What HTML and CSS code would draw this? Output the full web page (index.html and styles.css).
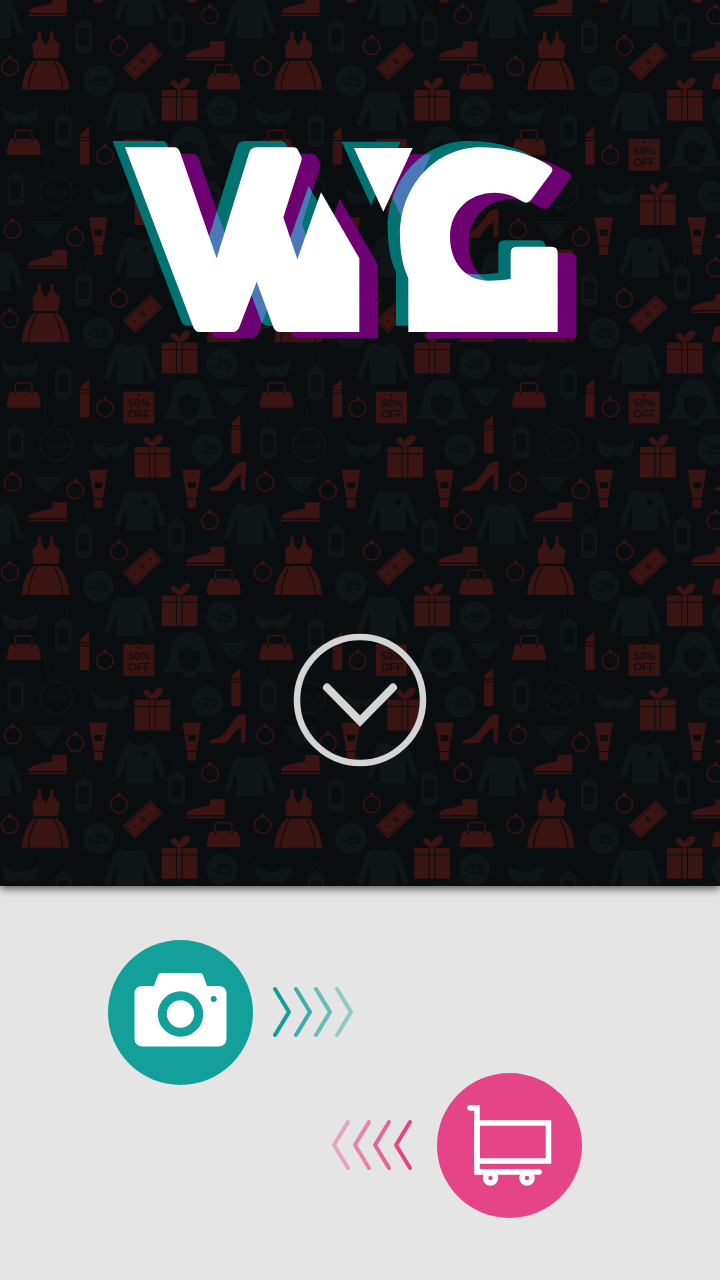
FILE: index.html
```html
<!DOCTYPE html>
<html lang="en">
<head>
<meta charset="utf-8">
<title>WYG</title>
<link rel="stylesheet" href="styles.css">
</head>
<body>
<header class="hero">
  <svg class="pattern" viewBox="0 0 720 886" aria-hidden="true">
    <defs>
      <g id="ring" class="ring"><circle r="25"/><circle class="knob" cy="-30" r="5.5"/></g>
      <g id="bag" class="red">
        <path d="M14 28H88Q94 28 96 36L102 66Q103 76 94 76H8Q-1 76 0 66L7 36Q9 28 14 28Z"/>
        <path class="redline" d="M26 30V10Q26 2 34 2H68Q76 2 76 10V30"/>
        <circle class="hole" cx="26" cy="33" r="3.5"/><circle class="hole" cx="76" cy="33" r="3.5"/>
      </g>
      <g id="lipstick" class="red">
        <path d="M2 32V22L27 0V32Z"/><rect y="35" width="28" height="6"/><rect y="44" width="28" height="71"/>
      </g>
      <g id="gift" class="red">
        <path d="M50 37C36 30 24 22 28 13C33 4 46 8 52 24C58 8 70-1 80 2C90 6 84 20 74 28C68 33 60 36 55 37Z"/>
        <rect y="38" width="107" height="19"/><rect y="60" width="107" height="70"/>
        <rect class="hole" x="43" y="38" width="3" height="92"/><rect class="hole" x="60" y="38" width="3" height="92"/>
      </g>
      <g id="tube" class="red">
        <path d="M0 0H56L42 85H14Z"/><rect x="15" y="88" width="26" height="25"/>
        <path class="hole" d="M15 37H41L39 55H18Z"/>
      </g>
      <g id="shoe" class="red">
        <path d="M0 48Q0 36 20 30L72 18V0H116V48Z"/><rect y="52" width="116" height="5"/>
      </g>
      <g id="disc" class="grey">
        <circle r="47"/><text class="disc-text" y="15" text-anchor="middle">-25</text>
      </g>
      <g id="collar">
        <path class="grey" d="M33 35Q55 55 85 57Q115 55 140 35Q145 80 110 87Q90 90 85 70Q80 90 60 87Q30 80 33 35Z"/>
        <path class="greyline" d="M33 35Q22-2 10 10M140 35Q150-2 162 8"/>
      </g>
      <g id="tag">
        <ellipse class="greyline" cx="25" cy="20" rx="11" ry="19"/>
        <path class="grey" d="M25 36L50 52V125Q50 140 25 140Q0 140 0 125V52Z"/>
        <rect class="hole" x="10" y="65" width="30" height="52" rx="2"/>
      </g>
      <path id="sweater" class="grey" d="M50 8Q78 22 106 8Q125 12 130 30L156 112L140 118L118 55V130H38V55L16 118L0 112L26 30Q30 12 50 8Z"/>
      <g id="panties">
        <path class="grey" d="M0 0H98L95 8L62 50Q50 60 38 50L3 8Z"/>
        <path class="greyline dark" d="M3 6H95M20 12L49 46L78 12"/>
      </g>

      <g id="tile">
        <use href="#bag" x="20" y="127"/>
        <use href="#bag" x="620" y="688"/>
        <use href="#lipstick" x="240" y="117"/>
        <use href="#lipstick" x="694" y="225"/>
        <use href="#ring" x="38" y="428"/>
        <use href="#ring" x="226" y="451"/>
        <use href="#ring" x="315" y="205"/>
        <use href="#ring" x="630" y="543"/>
        <use href="#ring" x="357" y="635"/>
        <use href="#ring" x="30" y="697"/>
        <g class="red">
          <rect x="370" y="155" width="93" height="95"/>
          <circle class="hole" cx="416" cy="165" r="3.5"/>
          <text class="off-text" x="417" y="202" text-anchor="middle">50%</text>
          <text class="off-text" x="417" y="235" text-anchor="middle">OFF</text>
        </g>
        <use href="#gift" x="404" y="283"/>
        <use href="#gift" x="485" y="728"/>
        <use href="#tube" x="267" y="390"/>
        <use href="#tube" x="547" y="390"/>
        <path class="red" d="M628 452Q628 443 638 441Q663 435 678 415L710 373Q716 365 728 365H738V385L736 450H723L723 403Q698 420 688 440Q682 452 668 452Z"/>
        <use href="#shoe" x="85" y="487"/>
        <use href="#shoe" x="558" y="620"/>
        <g class="red">
          <path d="M113 590H123V610L137 632L150 610V590H160V612Q170 620 180 630L175 671H100L97 630Q105 620 113 612Z"/>
          <path d="M101 678H173Q205 710 208 765H65Q68 710 101 678Z"/>
          <path class="holeline" d="M85 765Q87 720 110 680M188 765Q186 720 163 680"/>
        </g>
        <g transform="translate(428 680) rotate(-43)" class="red">
          <rect x="-56" y="-26" width="112" height="52"/>
          <rect class="holeline thin" x="-50" y="-20" width="100" height="40"/>
          <circle class="hole" cx="-32" r="3"/><circle class="hole" cx="32" r="3"/>
          <text class="bill-text" y="10" text-anchor="middle">$</text>
        </g>

        <use href="#sweater" x="312" y="760"/>
        <ellipse class="hole" cx="390" cy="762" rx="18" ry="10"/>
        <use href="#sweater" x="671" y="482"/>
        <ellipse class="hole" cx="749" cy="484" rx="18" ry="9"/>
        <use href="#sweater" x="342" y="442"/>
        <path class="hole" d="M402 446L418 462L434 446L428 440H408Z"/>
        <path class="hole" d="M427 478H443V490L435 498L427 490Z"/>
        <use href="#disc" x="295" y="738"/>
        <use href="#disc" x="666" y="72"/>
        <use href="#disc" x="622" y="328"/>
        <use href="#collar" x="732" y="24"/>
        <use href="#collar" x="245" y="265"/>
        <use href="#tag" x="165" y="40"/>
        <use href="#tag" x="22" y="218"/>
        <use href="#tag" x="505" y="498"/>
        <use href="#tag" x="226" y="517"/>
        <path class="grey" d="M568 117C610 117 622 150 626 180C630 205 640 225 652 238H485C498 225 508 205 512 180C516 150 528 117 568 117Z"/>
        <path class="hole" d="M568 160C550 170 538 175 535 172C532 205 545 235 568 235C590 235 604 205 600 172C590 178 578 172 568 160Z"/>
        <rect class="grey" x="548" y="238" width="42" height="17"/>
        <use href="#panties" x="648" y="143"/>
        <use href="#panties" x="94" y="403"/>
        <circle class="greyring" cx="169" cy="315" r="48"/>
        <ellipse class="greyline" cx="150" cy="222" rx="14" ry="46" transform="rotate(-8 150 222)"/>
        <text class="sale-text" x="169" y="325" text-anchor="middle">SALE</text>
      </g>
      <g id="tile-row">
        <use href="#tile" x="-758"/>
        <use href="#tile" x="0"/>
        <use href="#tile" x="758"/>
        <use href="#tile" x="1516"/>
      </g>
    </defs>
    <g transform="translate(0 340) scale(.33333)">
      <use href="#tile-row" y="-1516"/>
      <use href="#tile-row" y="-758"/>
      <use href="#tile-row" y="0"/>
      <use href="#tile-row" y="758"/>
      <use href="#tile-row" y="1516"/>
    </g>
  </svg>

  <svg class="logo" viewBox="0 0 1470 660" aria-label="WYG logo">
    <defs>
      <path id="letters" d="M75 52H222Q235 52 240 66L350 385L447 70Q452 52 470 52H580Q590 52 595 62L604 80Q606 86 604 92L550 262L592 388L663 187L778 385V606H540Q526 606 520 592L470 455L418 592Q412 606 398 606H298Q286 606 280 592ZM762 54H938L850 245ZM925 606V445C908 410 900 365 900 315C900 165 1010 52 1140 52C1220 52 1290 70 1350 108Q1362 116 1354 128L1293 210Q1282 224 1266 214C1240 197 1215 188 1185 188C1105 188 1050 245 1050 320C1050 395 1095 452 1165 452C1190 452 1212 450 1232 447V368Q1232 350 1250 350H1355Q1373 350 1373 368V606Z"/>
      <clipPath id="purple-clip">
        <use href="#letters" x="56" y="19"/>
      </clipPath>
    </defs>
    <use class="logo-purple" href="#letters" x="56" y="19"/>
    <use class="logo-teal" href="#letters" x="-37" y="-19"/>
    <g clip-path="url(#purple-clip)">
      <use class="logo-blue" href="#letters" x="-37" y="-19"/>
    </g>
    <use class="logo-white" href="#letters"/>
  </svg>

  <svg class="down" viewBox="0 0 134 134" aria-label="Scroll down">
    <circle class="down-ring" cx="67" cy="67" r="63"/>
    <path class="down-mark" d="M34 54.5L67 88L100 54.5"/>
  </svg>
</header>

<main class="flow">
  <div class="flow-row flow-row-a">
    <svg class="badge" viewBox="0 0 145 145" aria-label="Camera">
      <circle class="badge-teal" cx="72.5" cy="72.5" r="72.5"/>
      <path class="badge-white" d="M53 33H92Q94 33 95 35L99 46H110Q118.500 46 118.500 54V98Q118.500 106.500 110 106.500H35Q26.500 106.500 26.500 98V54Q26.500 46 35 46H46L50 35Q51 33 53 33Z"/>
      <circle class="camera-lens" cx="72.5" cy="74" r="18.200"/>
      <circle class="badge-dot" cx="105.700" cy="59" r="3"/>
    </svg>
    <svg class="chevrons" viewBox="0 0 82 52" aria-hidden="true">
      <path class="chev chev-teal c1" d="M3 3L17 26L3 49"/>
      <path class="chev chev-teal c2" d="M24 3L38 26L24 49"/>
      <path class="chev chev-teal c3" d="M44 3L58 26L44 49"/>
      <path class="chev chev-teal c4" d="M65 3L79 26L65 49"/>
    </svg>
  </div>
  <div class="flow-row flow-row-b">
    <svg class="chevrons" viewBox="0 0 82 52" aria-hidden="true">
      <path class="chev chev-pink c4" d="M17 3L3 26L17 49"/>
      <path class="chev chev-pink c3" d="M38 3L24 26L38 49"/>
      <path class="chev chev-pink c2" d="M58 3L44 26L58 49"/>
      <path class="chev chev-pink c1" d="M79 3L65 26L79 49"/>
    </svg>
    <svg class="badge" viewBox="0 0 145 145" aria-label="Cart">
      <circle class="badge-pink" cx="72.5" cy="72.5" r="72.5"/>
      <path class="cart-line" d="M33 35H40V99H102"/>
      <rect class="cart-line" x="40" y="50" width="71.500" height="38"/>
      <circle class="cart-wheel" cx="53.500" cy="105" r="5"/>
      <circle class="cart-wheel" cx="90" cy="105" r="5"/>
    </svg>
  </div>
</main>
</body>
</html>
```
FILE: styles.css
```css
* { box-sizing: border-box; }
html, body { margin: 0; padding: 0; }
body {
  width: 720px;
  height: 1280px;
  overflow: hidden;
  background: #e5e5e5;
  font-family: "Liberation Sans", Arial, sans-serif;
}

.hero {
  position: relative;
  z-index: 1;
  height: 886px;
  padding: 130px 0 0 100px;
  background: #0b0e11;
  box-shadow: 0 3px 8px rgba(0, 0, 0, .6);
}
.pattern {
  position: absolute;
  top: 0;
  left: 0;
  width: 720px;
  height: 886px;
}
.red { fill: #3a1413; }
.grey { fill: #101518; }
.hole { fill: #0b0e11; }
.ring circle { fill: none; stroke: #3a1413; stroke-width: 4.5; }
.ring .knob { fill: #3a1413; stroke: none; }
.redline { fill: none; stroke: #3a1413; stroke-width: 4; }
.holeline { fill: none; stroke: #0f0d0e; stroke-width: 4; }
.holeline.thin { stroke-width: 2; }
.greyline { fill: none; stroke: #101518; stroke-width: 2.5; }
.greyline.dark { stroke: #0b0e11; }
.greyring { fill: none; stroke: #101518; stroke-width: 6; }
.disc-text { font: 700 42px "Liberation Sans", sans-serif; fill: #0b0e11; }
.off-text { font: 700 33px "Liberation Sans", sans-serif; fill: #120f10; }
.bill-text { font: 700 28px "Liberation Sans", sans-serif; fill: #120f10; }
.sale-text { font: 700 29px "Liberation Sans", sans-serif; fill: #101518; }

.logo {
  position: relative;
  display: block;
  width: 490px;
  height: 220px;
}
.logo-purple { fill: #75007a; opacity: .93; }
.logo-teal { fill: #007a78; opacity: .93; }
.logo-blue { fill: #4b78b8; }
.logo-white { fill: #fff; }

.down {
  position: relative;
  display: block;
  width: 134px;
  height: 134px;
  margin: 283px 0 0 192.500px;
}
.down-ring { fill: none; stroke: #d4d4d4; stroke-width: 6.5; }
.down-mark { fill: none; stroke: #d4d4d4; stroke-width: 8; stroke-linecap: round; }

.flow { padding-top: 53.500px; }
.flow-row { display: flex; align-items: center; }
.flow-row-a { margin-left: 108px; gap: 19px; }
.flow-row-b { margin: -12px 0 0 331px; gap: 24px; }
.badge { display: block; width: 145px; height: 145px; flex: none; }
.badge-teal { fill: #14a09a; }
.badge-pink { fill: #e54486; }
.badge-white { fill: #fff; }
.badge-dot { fill: #14a09a; }
.camera-lens { fill: #fff; stroke: #14a09a; stroke-width: 9; }
.chevrons { display: block; width: 82px; height: 52px; flex: none; }
.chev { fill: none; stroke-width: 4; stroke-linecap: round; stroke-linejoin: round; }
.chev-teal { stroke: #14a09a; }
.chev-pink { stroke: #e54486; }
.c1 { opacity: 1; }
.c2 { opacity: .8; }
.c3 { opacity: .6; }
.c4 { opacity: .4; }
.cart-line { fill: none; stroke: #fff; stroke-width: 5.5; stroke-linecap: round; }
.cart-wheel { fill: none; stroke: #fff; stroke-width: 5.5; }
```
